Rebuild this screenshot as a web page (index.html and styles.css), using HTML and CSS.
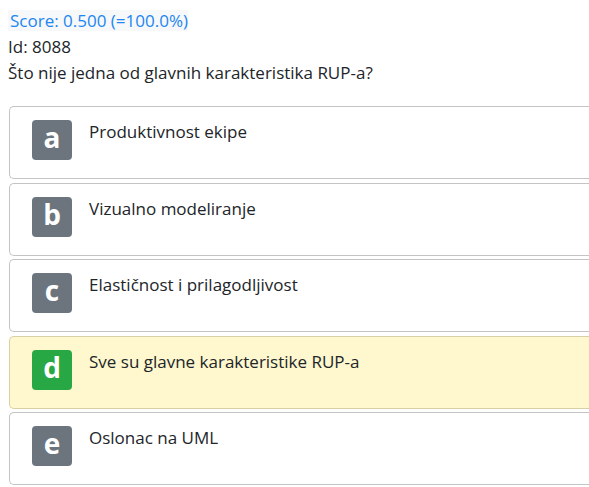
FILE: index.html
```html
<!DOCTYPE html>
<html lang="hr">
<head>
<meta charset="utf-8">
<title>Pitanje 8088</title>
<link rel="stylesheet" href="styles.css">
</head>
<body>
<div class="score-line"><span class="score">Score: 0.500 (=100.0%)</span></div>
<div class="meta">Id: 8088</div>
<div class="question">Što nije jedna od glavnih karakteristika RUP-a?</div>
<div class="answers">
  <div class="answer">
    <span class="badge">a</span>
    <span class="answer-text">Produktivnost ekipe</span>
  </div>
  <div class="answer">
    <span class="badge">b</span>
    <span class="answer-text">Vizualno modeliranje</span>
  </div>
  <div class="answer">
    <span class="badge">c</span>
    <span class="answer-text">Elastičnost i prilagodljivost</span>
  </div>
  <div class="answer answer-correct">
    <span class="badge badge-correct">d</span>
    <span class="answer-text">Sve su glavne karakteristike RUP-a</span>
  </div>
  <div class="answer">
    <span class="badge">e</span>
    <span class="answer-text">Oslonac na UML</span>
  </div>
</div>
</body>
</html>
```
FILE: styles.css
```css
body {
  margin: 8px 0 8px 8px;
  font-family: "Open Sans", "Noto Sans", sans-serif;
  font-size: 17px;
  color: #212529;
  background: #fff;
}
.score-line {
  margin-top: 2px;
  line-height: 21px;
}
.score {
  display: inline-block;
  padding-left: 2px;
  background: #f7f8fa;
  color: #2186f2;
}
.meta {
  margin-top: 3px;
  line-height: 26px;
}
.question {
  line-height: 26px;
}
.answers {
  margin-top: 20px;
  margin-left: 1px;
}
.answer {
  display: flex;
  align-items: flex-start;
  gap: 17px;
  height: 73px;
  box-sizing: border-box;
  padding: 13px 0 18px 22px;
  margin-bottom: 3.5px;
  border: 1px solid #c4c4c4;
  border-right: none;
  border-radius: 5px 0 0 5px;
  background: #fff;
}
.answer-correct {
  background: #fff8cf;
  border-color: #d8d0a4;
}
.badge {
  flex: 0 0 40px;
  width: 40px;
  height: 40px;
  box-sizing: border-box;
  padding-bottom: 5px;
  line-height: 35px;
  border-radius: 4px;
  background: #6c757d;
  color: #fff;
  font-size: 28px;
  font-weight: 700;
  text-align: center;
}
.badge-correct {
  background: #28a745;
}
.answer-text {
  margin-top: -1px;
  line-height: 26px;
}
```
